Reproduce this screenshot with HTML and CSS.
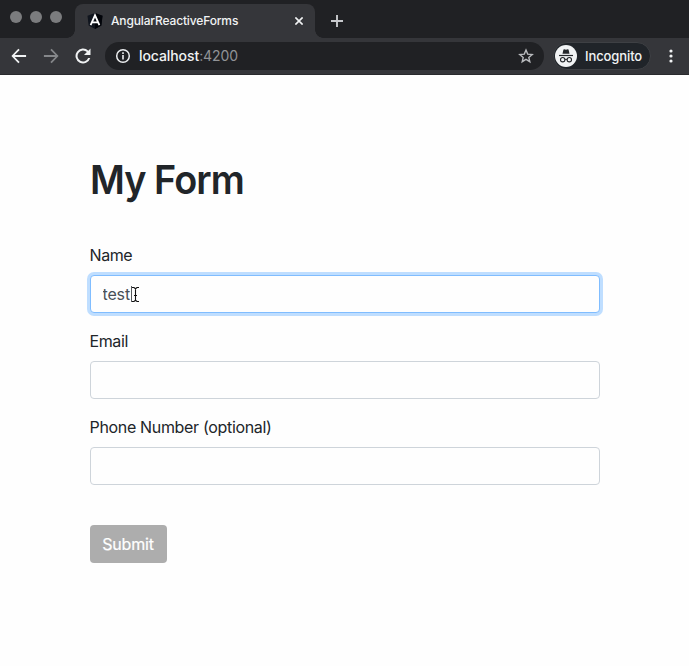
FILE: index.html
```html
<!DOCTYPE html>
<html lang="en">
<head>
<meta charset="utf-8">
<title>AngularReactiveForms</title>
<link rel="stylesheet" href="styles.css">
</head>
<body>
<header class="browser">
  <div class="tabs">
    <div class="lights"><i></i><i></i><i></i></div>
    <div class="tab">
      <svg class="favicon" width="16" height="16" viewBox="0 0 16 16"><path d="M8 0L15.5 2.7 14.4 12.4 8 16 1.6 12.4.5 2.7z" fill="#10151e"/><path d="M8 0L15.5 2.7 14.4 12.4 8 16z" fill="#020409"/><path d="M3.6 12.2L8 2.3l4.4 9.9M5.5 9.4h5" fill="none" stroke="#fff" stroke-width="1.8"/></svg>
      <span class="tab-title">AngularReactiveForms</span>
      <svg class="close" width="8" height="8" viewBox="0 0 8 8"><path d="M.4.4l7.2 7.2M7.600.4L.4 7.600" stroke="#f1f3f4" stroke-width="1.600"/></svg>
    </div>
    <svg class="plus" width="12" height="12" viewBox="0 0 12 12"><path d="M6 0v12M0 6h12" stroke="#c8cacd" stroke-width="1.9"/></svg>
  </div>
  <div class="toolbar">
    <svg class="back" width="20" height="20" viewBox="0 0 24 24"><path fill="#f1f3f4" d="M20.5 10.8H6.8l6-6L11.200 3.200 2.900 12l8.300 8.800 1.600-1.600-6-6h13.700z"/></svg>
    <svg class="forward" width="20" height="20" viewBox="0 0 24 24"><path fill="#85878a" d="M3.500 10.800h13.700l-6-6 1.600-1.600 8.300 8.800-8.300 8.800-1.600-1.600 6-6H3.500z"/></svg>
    <svg class="reload" width="20" height="20" viewBox="0 0 24 24"><path fill="#f1f3f4" d="M18.400 5.600A9 9 0 1 0 20.700 14.500h-2.500A6.600 6.600 0 1 1 16.700 7.300L13.200 10.800H21V3z"/></svg>
    <div class="address">
      <svg width="16" height="16" viewBox="0 0 16 16"><circle cx="8" cy="8" r="6.300" fill="none" stroke="#eceef0" stroke-width="1.500"/><path d="M8 7v4.500M8 4.200v1.700" stroke="#eceef0" stroke-width="1.600"/></svg>
      <span class="url">localhost<span class="port">:4200</span></span>
      <svg class="star" width="16" height="16" viewBox="0 0 16 16"><path d="M8 2l1.700 4.100 4.500.400-3.400 2.900 1 4.300L8 11.400l-3.800 2.300 1-4.300-3.400-2.900 4.500-.4z" fill="none" stroke="#b9bbbe" stroke-width="1.400"/></svg>
    </div>
    <div class="profile">
      <svg width="22" height="22" viewBox="0 0 22 22"><circle cx="11" cy="11" r="11" fill="#f1f3f4"/><g fill="#24272b"><path d="M7.500 8.800l.9-4q.2-.6.800-.5l1.800.4 1.800-.4q.6-.1.800.5l.9 4z"/><path d="M4 9.900h14v1.200H4z"/></g><g fill="none" stroke="#24272b" stroke-width="1.100"><circle cx="7.700" cy="14.700" r="2.200"/><circle cx="14.300" cy="14.700" r="2.200"/><path d="M9.900 14.600q1.100-.8 2.200 0"/></g></svg>
      <span>Incognito</span>
    </div>
    <svg class="menu" width="4" height="14" viewBox="0 0 4 14"><g fill="#f1f3f4"><circle cx="2" cy="2" r="1.600"/><circle cx="2" cy="7" r="1.600"/><circle cx="2" cy="12" r="1.600"/></g></svg>
  </div>
</header>
<main class="page">
  <h1>My Form</h1>
  <form>
    <div class="group"><label for="name">Name</label>
      <div class="field">
        <input class="control focused" id="name" type="text" value="test">
        <i class="caret"></i>
        <svg class="pointer" width="9" height="17" viewBox="0 0 9 17"><path d="M1 1.500h2l1.500 1.200L6 1.500h2M1 15.500h2l1.500-1.200L6 15.500h2M4.500 2.500v12M3 9.500h3" fill="none" stroke="#fff" stroke-width="2.400"/><path d="M1 1.500h2l1.500 1.200L6 1.500h2M1 15.500h2l1.500-1.200L6 15.500h2M4.500 2.500v12M3 9.500h3" fill="none" stroke="#111" stroke-width="1.100"/></svg>
      </div>
    </div>
    <div class="group"><label for="email">Email</label><input class="control" id="email" type="text"></div>
    <div class="group"><label class="wide" for="phone">Phone Number (optional)</label><input class="control" id="phone" type="text"></div>
    <button class="submit" type="button">Submit</button>
  </form>
</main>
</body>
</html>
```
FILE: styles.css
```css
* { box-sizing: border-box; }
body { margin: 0; height: 666px; overflow: hidden; background: #fefefe; color: #212529; font: 16px/24px Inter, sans-serif; }
svg { display: block; flex: none; }
.browser { height: 75px; background: #35363a; border-bottom: 1px solid #292a2d; }
.tabs { display: flex; height: 38px; background: #202124; }
.lights { display: flex; gap: 8px; width: 75px; padding: 11px 0 0 10px; }
.lights i { width: 12px; height: 12px; border-radius: 50%; background: #7b7c7e; }
.tab { position: relative; display: flex; align-items: center; width: 240px; height: 34px; margin-top: 4px; padding: 0 12px; border-radius: 8px 8px 0 0; background: #35363a; }
.tab::before, .tab::after { content: ""; position: absolute; bottom: 0; width: 8px; height: 8px; }
.tab::before { left: -8px; background: radial-gradient(circle at 0 0, #202124 7.5px, #35363a 8px); }
.tab::after { right: -8px; background: radial-gradient(circle at 100% 0, #202124 7.5px, #35363a 8px); }
.tab-title { margin-left: 8px; color: #f1f3f4; font-size: 12px; font-weight: 500; letter-spacing: -.15px; }
.close { margin-left: auto; }
.plus { margin: 15px 0 0 16px; }
.toolbar { display: flex; align-items: center; height: 36px; padding: 0 16.500px 0 9px; }
.forward { margin-left: 12px; }
.reload { margin-left: 12px; }
.address { display: flex; align-items: center; width: 439px; height: 28px; margin-left: 12px; padding: 0 10px; border-radius: 14px; background: #202124; color: #f1f3f4; }
.url { margin-left: 8px; font-size: 14px; font-weight: 500; letter-spacing: -.08px; }
.port { color: #919396; font-weight: 400; }
.star { margin-left: auto; }
.profile { display: flex; align-items: center; width: 98px; height: 28px; margin-left: 9px; padding: 0 1px; border: 1px solid #3e4044; border-radius: 14px; background: #202429; color: #f1f3f4; font-size: 13px; font-weight: 500; letter-spacing: -.1px; }
.profile span { margin-left: 8px; }
.menu { margin-left: auto; }
.page { width: 510px; margin-left: 90px; padding-top: 81px; }
h1 { margin: 0 0 39px; font-size: 40px; line-height: 48px; font-weight: 570; letter-spacing: -1px; transform: scaleX(.945); transform-origin: 0 50%; }
.group { height: 70px; margin-bottom: 16px; }
label { display: block; height: 24px; margin: 0 0 8px -.5px; letter-spacing: -.4px; }
.wide { letter-spacing: -.33px; }
.field { position: relative; }
.control { display: block; width: 510px; height: 38px; padding: 6px 12px; border: 1px solid #ced4da; border-radius: 4px; outline: 0; background: #fefefe; color: #495057; font: inherit; letter-spacing: -.15px; }
.focused { padding-left: 11.500px; border-color: #80bdff; box-shadow: 0 0 0 3px #bfdeff; }
.caret { position: absolute; left: 41px; top: 11px; width: 1px; height: 16px; background: #55585c; }
.pointer { position: absolute; left: 41px; top: 11px; }
.submit { display: block; width: 77px; height: 38px; margin-top: 40px; padding: 0 1px 0 0; border: 0; border-radius: 4px; background: #adadad; color: #fff; font: inherit; -webkit-text-stroke: .2px #fff; letter-spacing: -.2px; }
```
